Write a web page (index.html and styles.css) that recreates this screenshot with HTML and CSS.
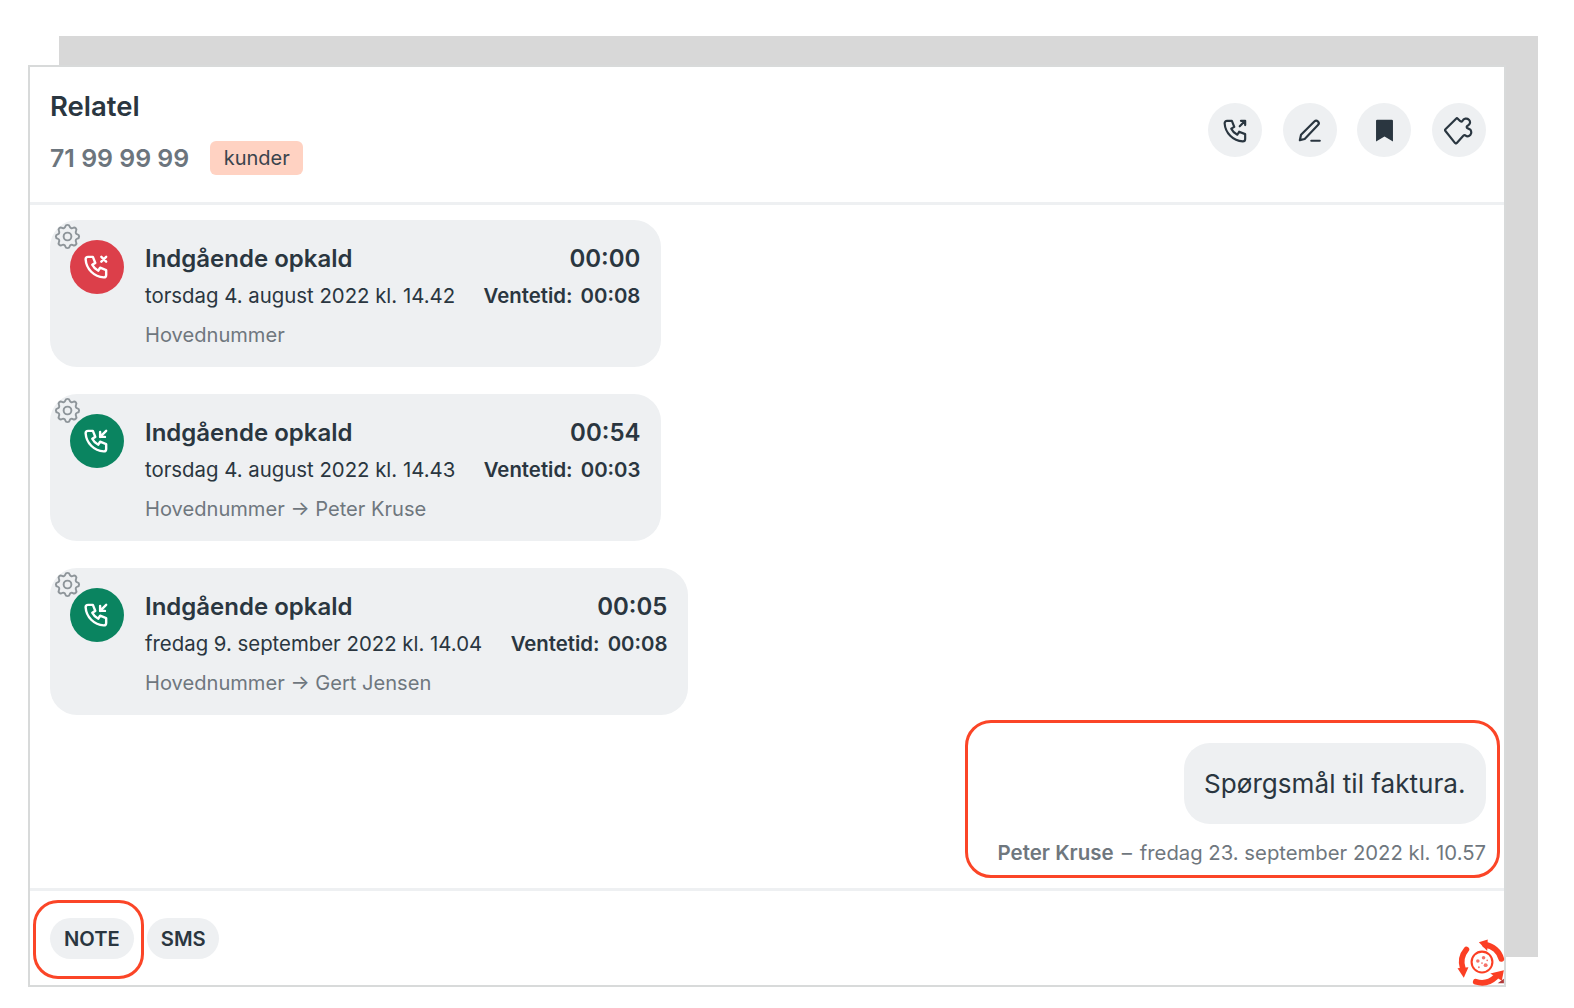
FILE: index.html
```html
<!DOCTYPE html>
<html lang="da">
<head>
<meta charset="utf-8">
<title>Relatel</title>
<link rel="stylesheet" href="styles.css">
</head>
<body>
<svg class="defs" width="0" height="0" aria-hidden="true">
  <defs>
    <path id="phone" d="M5 4h4l2 5l-2.500 1.500a11 11 0 0 0 5 5l1.500 -2.500l5 2v4a2 2 0 0 1 -2 2a16 16 0 0 1 -15 -15a2 2 0 0 1 2 -2"/>
    <g id="gear">
      <path d="M10.325 4.317c.426 -1.756 2.924 -1.756 3.350 0a1.724 1.724 0 0 0 2.573 1.066c1.543 -.94 3.310 .826 2.370 2.370a1.724 1.724 0 0 0 1.065 2.572c1.756 .426 1.756 2.924 0 3.350a1.724 1.724 0 0 0 -1.066 2.573c.94 1.543 -.826 3.310 -2.370 2.370a1.724 1.724 0 0 0 -2.572 1.065c-.426 1.756 -2.924 1.756 -3.350 0a1.724 1.724 0 0 0 -2.573 -1.066c-1.543 .94 -3.310 -.826 -2.370 -2.370a1.724 1.724 0 0 0 -1.065 -2.572c-1.756 -.426 -1.756 -2.924 0 -3.350a1.724 1.724 0 0 0 1.066 -2.573c-.94 -1.543 .826 -3.310 2.370 -2.370c1 .608 2.296 .07 2.572 -1.065z"/>
      <circle cx="12" cy="12" r="3"/>
    </g>
  </defs>
</svg>
<main class="stage">
  <div class="backdrop"></div>
  <section class="card">
    <header class="head">
      <div class="who">
        <h1 class="name">Relatel</h1>
        <div class="sub">
          <span class="number">71 99 99 99</span>
          <span class="tag">kunder</span>
        </div>
      </div>
      <div class="actions">
        <button class="round"><svg class="ic" viewBox="0 0 24 24"><use href="#phone"/><path d="M15.500 8.500l4.500 -4.500M16.500 4h3.500v3.500"/></svg></button>
        <button class="round"><svg class="ic" viewBox="0 0 24 24"><path d="M4 20l1 -4.500L16 4.500a2.100 2.100 0 0 1 3 3L8 19z"/><path d="M13.500 20.500h7"/></svg></button>
        <button class="round"><svg class="ic" viewBox="0 0 24 24"><path class="solid" d="M6 3h12a1 1 0 0 1 1 1v17l-7 -4l-7 4V4a1 1 0 0 1 1 -1z"/></svg></button>
        <button class="round"><svg class="ic" viewBox="0 0 24 24"><path d="M1.200 11L10 2.200a1 1 0 0 1 1.400 0L13.500 4.300Q14.600 5 15.300 4C16.200 2 19 1.500 20.600 3.100C22.200 4.700 21.700 7 19.600 8Q18.200 8.800 19.200 10L21.900 11.400C23.200 13.500 22.400 15.800 20.600 16.600C19.400 17.200 18.400 16.600 17.600 16Q16.400 15.500 15.600 16.800L10.600 22.400a1 1 0 0 1 -1.400 0L1.200 12.400a1 1 0 0 1 0 -1.400z"/></svg></button>
      </div>
    </header>

    <div class="feed">
      <article class="call">
        <svg class="gear" viewBox="0 0 24 24"><use href="#gear"/></svg>
        <span class="dot missed"><svg class="ic" viewBox="0 0 24 24"><use href="#phone"/><path d="M16 4l4 4m0 -4l-4 4"/></svg></span>
        <div class="info">
          <div class="row title"><span>Indgående opkald</span><span>00:00</span></div>
          <div class="row"><span>torsdag 4. august 2022 kl. 14.42</span><span class="wait">Ventetid: 00:08</span></div>
          <div class="route">Hovednummer</div>
        </div>
      </article>
      <article class="call">
        <svg class="gear" viewBox="0 0 24 24"><use href="#gear"/></svg>
        <span class="dot answered"><svg class="ic" viewBox="0 0 24 24"><use href="#phone"/><path d="M15 9l5 -5M15 5v4h4"/></svg></span>
        <div class="info">
          <div class="row title"><span>Indgående opkald</span><span>00:54</span></div>
          <div class="row"><span>torsdag 4. august 2022 kl. 14.43</span><span class="wait">Ventetid: 00:03</span></div>
          <div class="route">Hovednummer → Peter Kruse</div>
        </div>
      </article>
      <article class="call">
        <svg class="gear" viewBox="0 0 24 24"><use href="#gear"/></svg>
        <span class="dot answered"><svg class="ic" viewBox="0 0 24 24"><use href="#phone"/><path d="M15 9l5 -5M15 5v4h4"/></svg></span>
        <div class="info">
          <div class="row title"><span>Indgående opkald</span><span>00:05</span></div>
          <div class="row"><span>fredag 9. september 2022 kl. 14.04</span><span class="wait">Ventetid: 00:08</span></div>
          <div class="route">Hovednummer → Gert Jensen</div>
        </div>
      </article>
      <div class="note">
        <span class="mark mark-note"></span>
        <p class="bubble">Spørgsmål til faktura.</p>
        <p class="meta"><b>Peter Kruse</b><span class="dash">–</span>fredag 23. september 2022 kl. 10.57</p>
      </div>
    </div>

    <footer class="foot">
      <span class="mark mark-tab"></span>
      <button class="pill">NOTE</button>
      <button class="pill">SMS</button>
    </footer>
    <svg class="logo" viewBox="0 0 48 48">
      <path class="logo-corner" d="M45 40v4.500h-6z"/>
      <g class="logo-arcs">
        <path d="M9 12A19 19 0 0 0 5.500 30"/>
        <path d="M27 7.500A18 18 0 0 1 42.500 21"/>
        <path d="M18 43A19.500 19.500 0 0 0 37 38.500"/>
      </g>
      <g class="logo-heads">
        <path d="M.5 30L11 29L6.500 39z"/>
        <path d="M21 5L29.500 2.500L29 13.500z"/>
        <path d="M45 32L32 35L43 42z"/>
      </g>
      <circle class="logo-ring" cx="24" cy="24" r="10"/>
      <g class="logo-spots">
        <circle cx="20" cy="23" r="1.700"/><circle cx="25.500" cy="20" r="1.700"/><circle cx="27.500" cy="27" r="1.900"/><circle cx="21" cy="29" r=".9"/><circle cx="29" cy="22.500" r=".8"/><circle cx="24" cy="25" r=".8"/>
      </g>
    </svg>
  </section>
</main>
</body>
</html>
```
FILE: styles.css
```css
* { box-sizing: border-box; }
html, body { margin: 0; background: #fff; }
body {
  font-family: Inter, "Noto Sans", sans-serif;
  color: #2a3640;
}
.defs { position: absolute; }
.stage {
  position: relative;
  width: 1574px;
  height: 1008px;
  padding: 65px 0 0 28px;
}
.backdrop {
  position: absolute;
  left: 59px;
  top: 36px;
  width: 1479px;
  height: 921px;
  background: #d8d8d8;
}
.card {
  position: relative;
  display: flex;
  flex-direction: column;
  width: 1478px;
  height: 922px;
  background: #fff;
  border: 2px solid #d8dada;
}
.head {
  display: flex;
  justify-content: space-between;
  align-items: center;
  height: 138px;
  flex: none;
  padding: 0 18.500px 9px 20px;
  border-bottom: 3px solid #eef0f2;
}
.who { margin-top: 5px; }
.name {
  margin: 0 0 19px;
  font-size: 27.500px;
  line-height: 32px;
  font-weight: 600;
}
.sub { display: flex; align-items: center; gap: 21px; }
.number { font-size: 24.900px; font-weight: 600; color: #6c757d; }
.tag {
  padding: 0 13.500px;
  height: 34px;
  line-height: 34px;
  border-radius: 6px;
  background: #ffd2c2;
  font-size: 20px;
  color: #3a444d;
}
.actions { display: flex; gap: 20.400px; }
.round {
  width: 54px;
  height: 54px;
  padding: 0;
  display: flex;
  align-items: center;
  justify-content: center;
  border: 0;
  border-radius: 50%;
  background: #eef0f2;
  color: #2a3640;
}
.ic {
  width: 29px;
  height: 29px;
  fill: none;
  stroke: currentColor;
  stroke-width: 1.800;
  stroke-linecap: round;
  stroke-linejoin: round;
}
.ic .solid { fill: currentColor; stroke: none; }
.dot .ic { stroke-width: 2; }
.feed {
  flex: 1;
  display: flex;
  flex-direction: column;
  align-items: flex-start;
  gap: 27.700px;
  padding: 15px 18px 0 20px;
}
.call {
  position: relative;
  display: flex;
  gap: 21px;
  height: 146.500px;
  padding: 19.500px 21px 0 19.500px;
  border-radius: 27px;
  background: #eef0f2;
}
.gear {
  position: absolute;
  left: 1.500px;
  top: 1px;
  width: 31px;
  height: 31px;
  fill: none;
  stroke: #8e959a;
  stroke-width: 1.500;
}
.dot {
  flex: none;
  width: 54px;
  height: 54px;
  display: flex;
  align-items: center;
  justify-content: center;
  border-radius: 50%;
  color: #fff;
}
.missed { background: #dc3f4a; }
.answered { background: #0a8460; }
.info { font-size: 20.370px; line-height: 38.500px; padding-left: .5px; }
.row { display: flex; justify-content: space-between; gap: 28.500px; }
.title { font-size: 24px; font-weight: 600; line-height: 37.500px; }
.wait { font-weight: 600; word-spacing: 3px; }
.route { color: #6f777e; font-size: 20.100px; padding-top: .5px; }
.note {
  position: relative;
  align-self: flex-end;
  display: flex;
  flex-direction: column;
  align-items: flex-end;
}
.bubble {
  margin: 0;
  height: 81px;
  padding: 0 20.500px;
  line-height: 81px;
  font-size: 26.100px;
  border-radius: 26px;
  background: #eef0f2;
}
.meta {
  margin: 16px 0 0;
  font-size: 20.300px;
  line-height: 26px;
  color: #6f777e;
}
.meta b { font-weight: 600; font-size: 20.500px; }
.dash { margin: 0 8px; }
.mark {
  position: absolute;
  border: 3.500px solid #fb4527;
  pointer-events: none;
}
.mark-note { right: -14px; top: -23px; bottom: -12px; width: 535px; border-radius: 26px; }
.foot {
  position: relative;
  flex: none;
  display: flex;
  align-items: center;
  gap: 13.500px;
  height: 97px;
  padding: 1px 0 0 20px;
  border-top: 3px solid #eef0f2;
}
.mark-tab { left: 3px; top: 9px; width: 111px; height: 79px; border-radius: 25px; }
.pill {
  height: 41px;
  padding: 0 14px;
  border: 0;
  border-radius: 21px;
  background: #eef0f2;
  color: #2a3640;
  font: 600 20.200px Inter, sans-serif;
}
.pill + .pill { padding: 0 13.500px; }
.logo {
  position: absolute;
  right: -3px;
  bottom: -2px;
  width: 50px;
  height: 50px;
  overflow: visible;
}
.logo-corner { fill: #b03a3a; }
.logo-arcs path { fill: none; stroke: #fb3f24; stroke-width: 5.500; stroke-linecap: round; }
.logo-heads path { fill: #fb3f24; }
.logo-ring { fill: #fff; stroke: #fb3f24; stroke-width: 2; }
.logo-spots circle { fill: #f4726a; }
```
